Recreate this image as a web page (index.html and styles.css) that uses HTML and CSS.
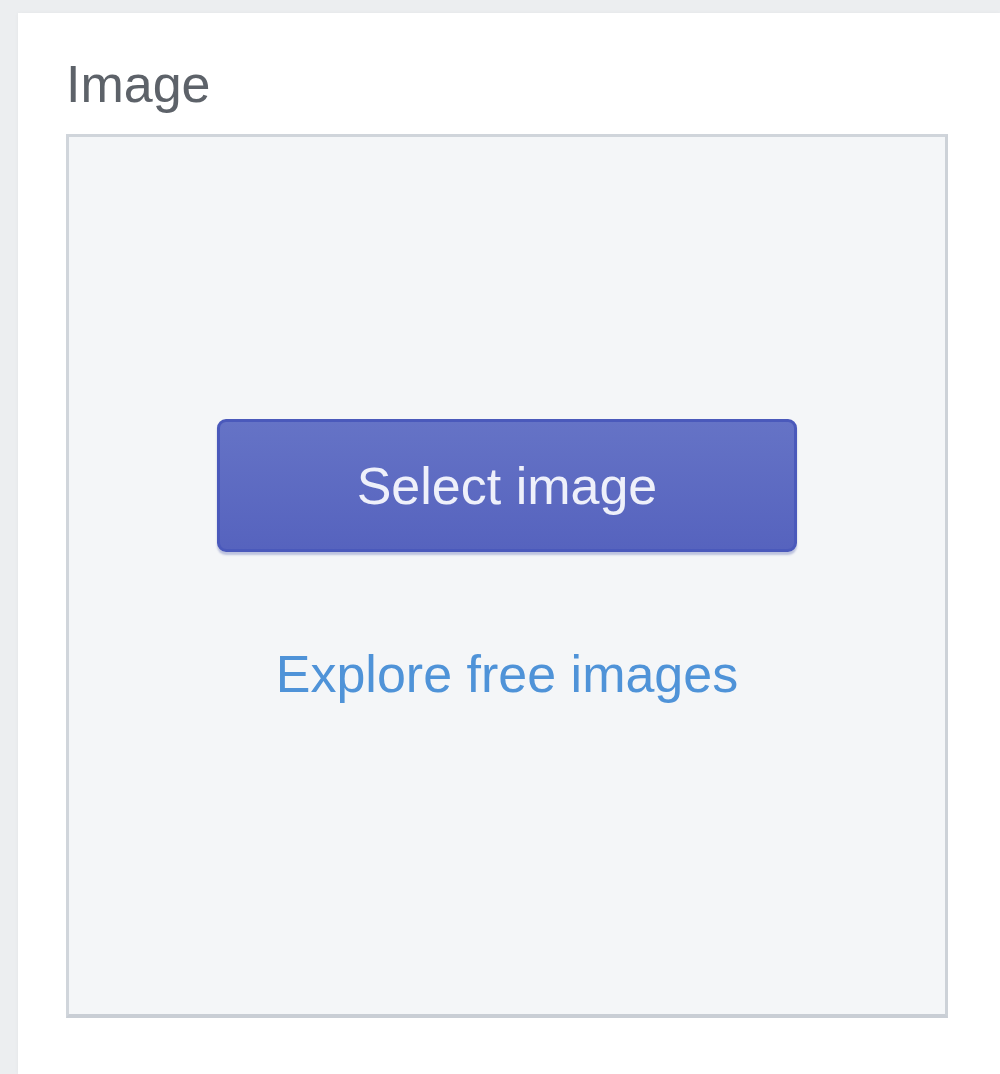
FILE: index.html
```html
<!DOCTYPE html>
<html lang="en">
<head>
<meta charset="utf-8">
<title>Image</title>
<link rel="stylesheet" href="styles.css">
</head>
<body>
<div class="card">
  <div class="label">Image</div>
  <div class="dropzone">
    <button class="btn-primary" type="button">Select image</button>
    <a class="link" href="#">Explore free images</a>
  </div>
</div>
</body>
</html>
```

FILE: styles.css
```css
html, body {
  margin: 0;
  padding: 0;
}
body {
  background: #eceef0;
  font-family: "Liberation Sans", Arial, sans-serif;
  height: 1074px;
  overflow: hidden;
}
.card {
  margin: 13px 0 0 18px;
  background: #ffffff;
  height: 1061px;
  padding: 40px 0 0 48px;
  box-sizing: border-box;
  box-shadow: 0 0 4px rgba(0,0,0,0.04);
}
.label {
  font-size: 52px;
  line-height: 62px;
  color: #5d6269;
  margin-bottom: 19px;
}
.dropzone {
  width: 882px;
  height: 884px;
  box-sizing: border-box;
  background: #f4f6f8;
  border: 3px solid #d0d5db;
  border-bottom-width: 4px;
  border-right-color: #cdd2d8;
  border-bottom-color: #c9ced5;
  display: flex;
  flex-direction: column;
  align-items: center;
  padding-top: 282px;
}
.btn-primary {
  width: 580px;
  height: 133px;
  box-sizing: border-box;
  border: 3px solid #4a59bb;
  border-radius: 9px;
  background: linear-gradient(180deg, #6573c6, #5663be);
  color: #eef0fa;
  font-family: "Liberation Sans", Arial, sans-serif;
  font-size: 52px;
  line-height: 62px;
  padding: 0;
  box-shadow: 0 3px 2px rgba(120,130,190,0.45);
}
.link {
  margin-top: 91px;
  font-size: 52px;
  line-height: 62px;
  color: #4f93d8;
  text-decoration: none;
}
```
